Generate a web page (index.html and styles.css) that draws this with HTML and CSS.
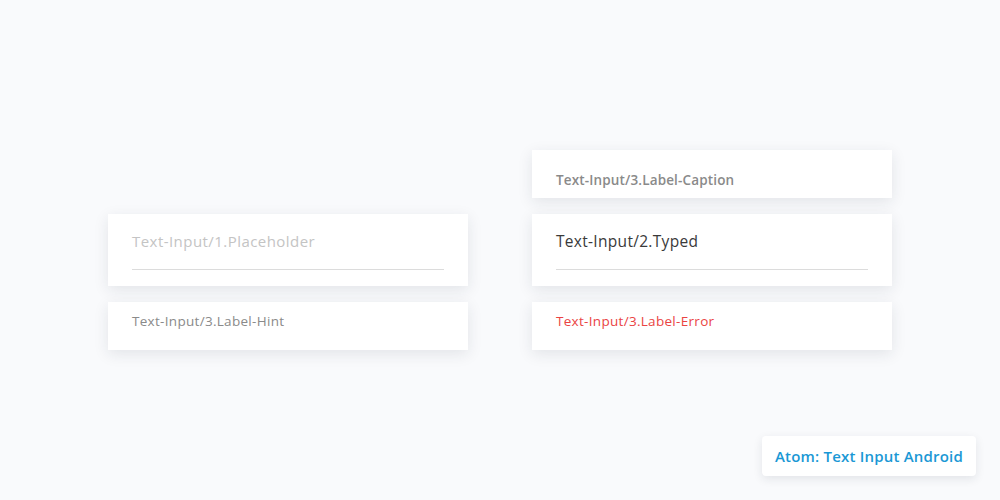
FILE: index.html
```html
<!DOCTYPE html>
<html>
<head>
<meta charset="utf-8">
<link rel="stylesheet" href="styles.css">
</head>
<body>
<main class="stage">
  <section class="column">
    <div class="card field">
      <div class="field-text placeholder">Text-Input/1.Placeholder</div>
      <div class="underline"></div>
    </div>
    <div class="card label">
      <div class="label-text hint">Text-Input/3.Label-Hint</div>
    </div>
  </section>
  <section class="column">
    <div class="card caption">
      <div class="caption-text">Text-Input/3.Label-Caption</div>
    </div>
    <div class="card field">
      <div class="field-text typed">Text-Input/2.Typed</div>
      <div class="underline"></div>
    </div>
    <div class="card label">
      <div class="label-text error">Text-Input/3.Label-Error</div>
    </div>
  </section>
</main>
<div class="badge">Atom: Text Input Android</div>
</body>
</html>
```
FILE: styles.css
```css
html, body {
  margin: 0;
  padding: 0;
}
body {
  width: 1000px;
  height: 500px;
  background: #f9fafc;
  font-family: "Open Sans", "Liberation Sans", sans-serif;
  position: relative;
  overflow: hidden;
}
.stage {
  height: 500px;
  display: flex;
  justify-content: center;
  align-items: center;
  gap: 64px;
}
.column {
  width: 360px;
  height: 200px;
  display: flex;
  flex-direction: column;
  justify-content: flex-end;
  gap: 16px;
}
.card {
  background: #fff;
  box-shadow: 0 4px 14px rgba(30, 40, 60, 0.10);
  padding: 0 24px;
  box-sizing: border-box;
}
.field {
  height: 72px;
  padding-top: 17px;
}
.field-text {
  font-size: 15px;
  line-height: 20px;
  height: 20px;
  letter-spacing: 0.45px;
}
.placeholder { color: #c4c4c4; }
.typed { color: #3a3a3a; font-size: 15.5px; letter-spacing: 0.3px; }
.underline {
  margin-top: 18px;
  height: 1px;
  background: #dcdcdc;
}
.label {
  height: 48px;
  padding-top: 9px;
}
.label-text {
  font-size: 13.5px;
  line-height: 20px;
  letter-spacing: 0.3px;
}
.hint { color: #8a8a8a; }
.error { color: #ea4343; }
.caption {
  height: 48px;
  padding-top: 20px;
}
.caption-text {
  font-size: 13.5px;
  line-height: 20px;
  font-weight: 600;
  letter-spacing: 0.15px;
  color: #8a8a8a;
}
.badge {
  position: absolute;
  right: 24px;
  bottom: 24px;
  width: 214px;
  height: 40px;
  box-sizing: border-box;
  background: #fff;
  border-radius: 4px;
  box-shadow: 0 3px 10px rgba(30, 40, 60, 0.10);
  display: flex;
  align-items: center;
  justify-content: center;
  font-size: 15px;
  font-weight: 600;
  letter-spacing: 0.2px;
  color: #1a98d5;
}
```
